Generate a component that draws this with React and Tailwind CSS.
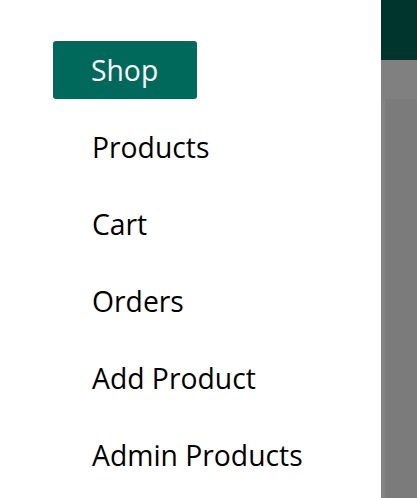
import React from "react";

const items = ["Products", "Cart", "Orders", "Add Product", "Admin Products"];

export default function App() {
  return (
    <div className="flex h-[498px] w-[417px] overflow-hidden bg-white" style={{ fontFamily: '"Open Sans", sans-serif' }}>
      <nav className="w-[381px] shrink-0 bg-white pl-[53px] pt-[41px]">
        <ul className="flex flex-col gap-[19px]">
          <li className="flex h-[58px]">
            <a className="flex h-[58px] w-[144px] items-center rounded-[3px] bg-[#00695c] pl-[38px] text-[28.3px] leading-none text-white">
              Shop
            </a>
          </li>
          {items.map((t) => (
            <li key={t} className="flex h-[58px]">
              <a className="flex h-[58px] items-center pl-[39px] pt-[1px] text-[28.3px] leading-none text-black">{t}</a>
            </li>
          ))}
        </ul>
      </nav>
      <div className="flex flex-1 flex-col bg-[#808080]">
        <div className="h-[60px] bg-[#00352e]" />
        <div className="mt-[39px] flex flex-1">
          <div className="w-[4px] bg-[#838383]" />
          <div className="flex-1 bg-[#7b7b7b]" />
        </div>
      </div>
    </div>
  );
}
